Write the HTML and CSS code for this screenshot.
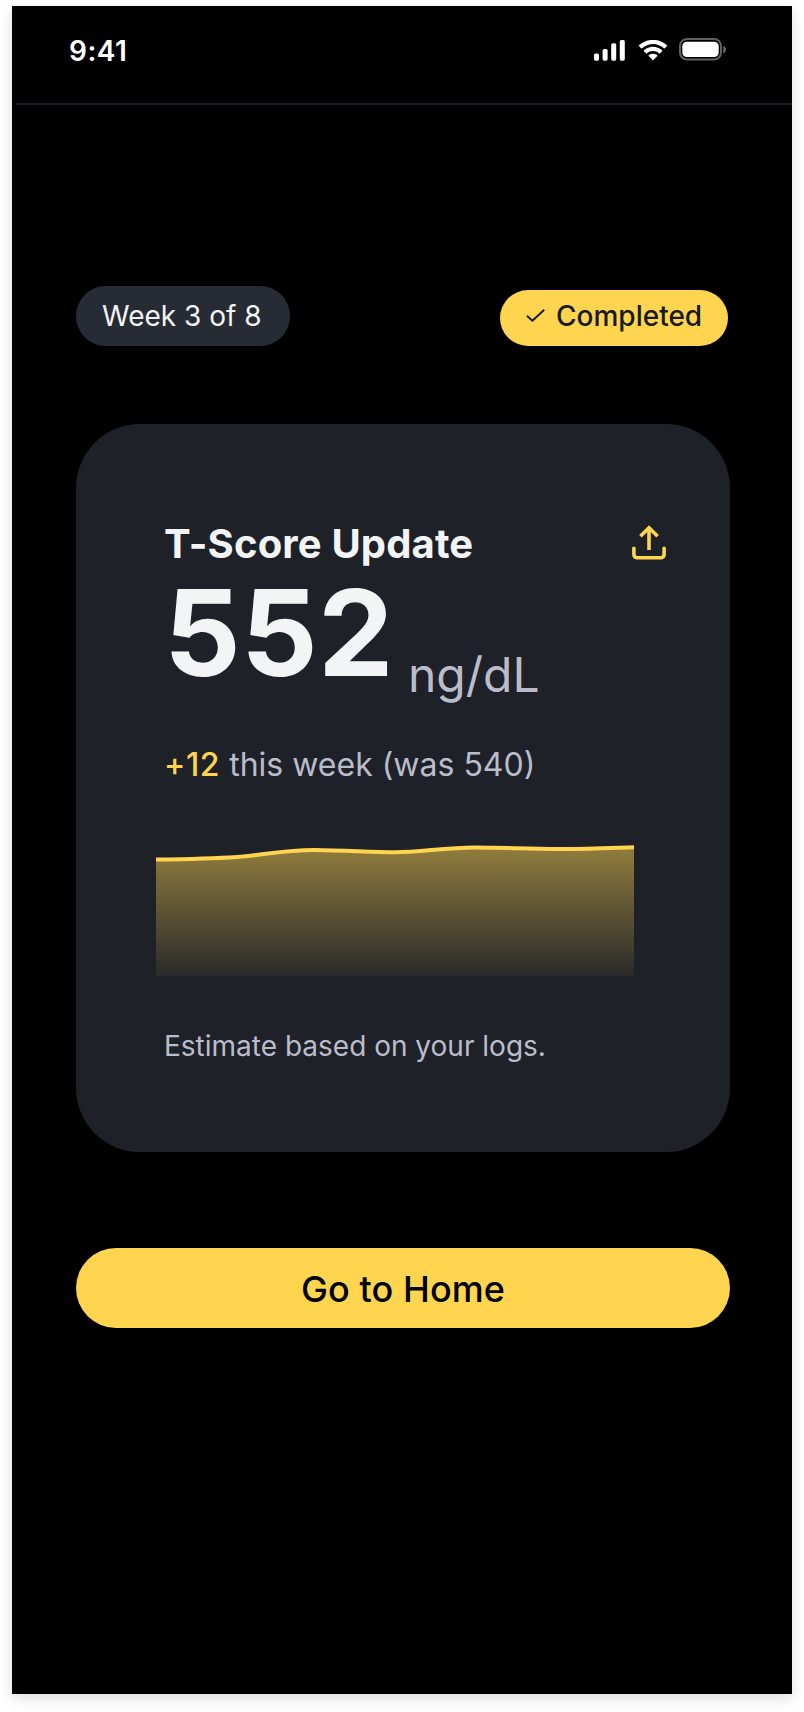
FILE: index.html
```html
<!DOCTYPE html>
<html lang="en">
<head>
<meta charset="utf-8">
<title>T-Score Update</title>
<link rel="stylesheet" href="styles.css">
</head>
<body>
<main class="phone">
  <header class="status-bar">
    <span class="time">9:41</span>
    <div class="status-icons">
      <svg class="signal" viewBox="0 0 31 21" fill="#fff">
        <rect x="0" y="13.4" width="5" height="7.3" rx="1.6"/>
        <rect x="8.6" y="9" width="5" height="11.7" rx="1.6"/>
        <rect x="17.2" y="3.2" width="5" height="17.5" rx="1.6"/>
        <rect x="25.8" y="0" width="5" height="20.7" rx="1.6"/>
      </svg>
      <svg class="wifi" viewBox="0 0 30 21" fill="#fff">
        <path d="M15 3.9c4.1 0 8 1.6 11 4.4.3.3.6.3.8 0l2.2-2.2c.2-.3.2-.6 0-.9C21.200-1.900 8.800-1.900 1 5.200c-.2.3-.2.600 0 .9l2.200 2.200c.2.3.5.3.8 0 3-2.800 6.900-4.400 11-4.400z"/>
        <path d="M15 11.100c2.200 0 4.400.8 6.100 2.400.2.200.6.200.8 0l2.200-2.300c.3-.2.300-.6 0-.9-5.200-4.800-13-4.800-18.200 0-.3.3-.3.7 0 .9l2.200 2.300c.2.200.6.200.8 0 1.700-1.600 3.900-2.400 6.100-2.400z"/>
        <path d="M19.300 16.100c.3-.2.300-.6 0-.9-2.500-2-6.100-2-8.600 0-.3.300-.3.700 0 .9l3.900 3.900c.2.300.6.300.8 0z"/>
      </svg>
      <svg class="battery" viewBox="0 0 48 23">
        <rect x="1" y="1" width="41" height="20.500" rx="7" fill="none" stroke="#fff" stroke-opacity=".38" stroke-width="2"/>
        <path d="M44.400 7.800v7.600c1.500-.6 2.600-2.100 2.600-3.800s-1.100-3.200-2.600-3.800z" fill="#fff" fill-opacity=".42"/>
        <rect x="3.300" y="3.700" width="36.400" height="15.400" rx="4.600" fill="#fff"/>
      </svg>
    </div>
  </header>

  <section class="content">
    <div class="badges">
      <span class="badge week">Week 3 of 8</span>
      <span class="badge completed">
        <svg class="check" viewBox="0 0 20 16" fill="none" stroke="#17191f" stroke-width="1.900" stroke-linecap="round" stroke-linejoin="round"><path d="M1.500 8.200L6.400 12.700L17.700 2.300"/></svg>
        <span>Completed</span>
      </span>
    </div>

    <article class="card">
      <div class="card-head">
        <h1>T-Score Update</h1>
        <svg class="share" viewBox="0 0 34 35" fill="none" stroke="#ffd54f" stroke-width="3.600">
          <path d="M17 25V3M8.400 11.200L17 2.700l8.600 8.500"/>
          <path stroke-linecap="round" d="M1.900 23.200v6.400a3.200 3.200 0 0 0 3.200 3.200h23.800a3.200 3.200 0 0 0 3.200-3.200v-6.400"/>
        </svg>
      </div>
      <div class="score"><strong>552</strong><span class="unit">ng/dL</span></div>
      <p class="change"><b>+12</b> this week (was 540)</p>
      <svg class="chart" viewBox="0 0 478 132">
        <defs>
          <linearGradient id="area" gradientUnits="userSpaceOnUse" x1="0" y1="0" x2="0" y2="132">
            <stop offset="0" stop-color="#ffd54f" stop-opacity=".52"/>
            <stop offset="1" stop-color="#ffd54f" stop-opacity=".05"/>
          </linearGradient>
        </defs>
        <path fill="url(#area)" d="M0 15.500C30 15.100 60 14.300 81 12.900C110 10.500 130 5.700 159 5.900C190 6.200 215 8.300 239 8.300C265 8.300 288 3.500 319 3.500C350 3.500 370 5 405 5C435 4.800 455 3.900 478 3.200V132H0Z"/>
        <path fill="none" stroke="#ffd54f" stroke-width="4" d="M0 15.500C30 15.100 60 14.300 81 12.900C110 10.500 130 5.700 159 5.900C190 6.200 215 8.300 239 8.300C265 8.300 288 3.500 319 3.500C350 3.500 370 5 405 5C435 4.800 455 3.900 478 3.200"/>
      </svg>
      <p class="note">Estimate based on your logs.</p>
    </article>

    <button class="home" type="button">Go to Home</button>
  </section>
</main>
</body>
</html>
```
FILE: styles.css
```css
* { box-sizing: border-box; }
body {
  margin: 0;
  padding: 6px 12px 18px;
  background: #fff;
  font-family: Inter, "Liberation Sans", sans-serif;
}
h1, p { margin: 0; }
svg { display: block; flex: none; }

.phone {
  width: 780px;
  height: 1688px;
  background: #000;
  box-shadow: 0 4px 12px rgba(20, 20, 43, .14);
}

.status-bar {
  display: flex;
  justify-content: space-between;
  height: 99px;
  margin-left: 4px;
  padding: 28px 65px 0 53px;
  border-bottom: 2px solid #1a1e23;
}
.time {
  font-size: 28px;
  line-height: 34px;
  font-weight: 600;
  letter-spacing: .5px;
  color: #fff;
}
.status-icons { display: flex; align-items: flex-start; padding-top: 6px; }
.signal { width: 31px; height: 21px; }
.wifi { width: 30px; height: 21px; margin-left: 13px; }
.battery { width: 48px; height: 23px; margin: -2px 0 0 11px; }

.content { padding: 181px 62px 0 64px; }

.badges {
  display: flex;
  justify-content: space-between;
  align-items: flex-end;
  padding-right: 2px;
}
.badge {
  display: flex;
  font-size: 28px;
  line-height: 34px;
  white-space: nowrap;
}
.week {
  width: 214px;
  height: 60px;
  padding: 13px 0 0 26px;
  border-radius: 30px;
  background: #272b34;
  color: #f3f4f6;
}
.completed {
  width: 228px;
  height: 56px;
  padding: 9px 0 0 26px;
  border-radius: 28px;
  background: #ffd54f;
  color: #17191f;
  font-weight: 500;
}
.check { width: 20px; height: 16px; margin: 9px 10px 0 0; }

.card {
  height: 728px;
  margin-top: 78px;
  padding: 95px 64px 0 88px;
  border-radius: 64px;
  background: #1f2129;
  color: #babdc9;
}
.card-head { display: flex; justify-content: space-between; }
.card-head h1 {
  padding-top: 1px;
  font-size: 40px;
  line-height: 48px;
  font-weight: 700;
  letter-spacing: .15px;
  color: #f3f4f6;
}
.share { width: 34px; height: 35px; margin-top: 6px; }
.score { display: flex; margin-top: 5px; }
.score strong {
  font-size: 120px;
  line-height: 120px;
  font-weight: 700;
  letter-spacing: .3px;
  color: #f3f4f6;
}
.unit {
  margin: 73px 0 0 14px;
  font-size: 48px;
  line-height: 58px;
  font-weight: 400;
}
.change {
  margin-top: 42px;
  font-size: 32px;
  line-height: 38px;
}
.change b { font-weight: 500; letter-spacing: .6px; color: #ffd54f; }
.chart { width: 478px; height: 132px; margin: 60px 0 0 -8px; }
.note {
  margin-top: 53px;
  font-size: 28px;
  line-height: 34px;
}

.home {
  display: block;
  width: 100%;
  height: 80px;
  margin-top: 96px;
  padding: 2px 0 0;
  border: 0;
  border-radius: 40px;
  background: #ffd54f;
  color: #000;
  font: 500 36px/44px Inter, "Liberation Sans", sans-serif;
  letter-spacing: .1px;
}
```
